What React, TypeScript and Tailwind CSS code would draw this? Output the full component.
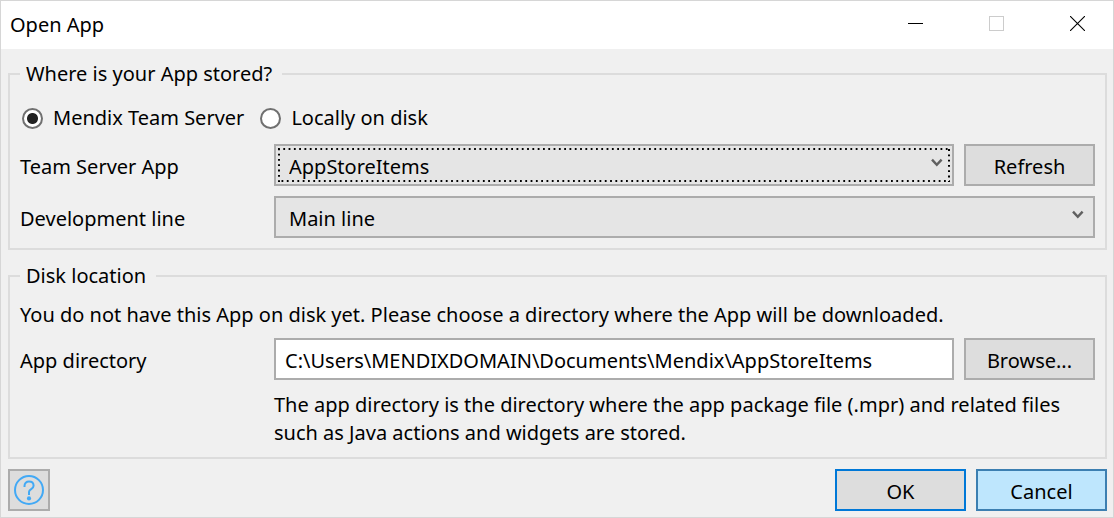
import { useState } from "react";
import type { ReactNode } from "react";

const control = "h-[42px] border-2 border-[#acacac]";
const pushButton = "h-[42px] w-[131px] shrink-0 border-2 pt-[3px] text-center";

function Chevron() {
  return (
    <svg className="pointer-events-none absolute top-[14px] right-[11px]" width="12" height="10" viewBox="0 0 12 10" fill="none" aria-hidden="true">
      <path d="M1 1.6 L5.8 6.8 L10.6 1.6" stroke="#606060" strokeWidth="2.4" />
    </svg>
  );
}

function Dropdown({ id, value, focused }: { id: string; value: string; focused?: boolean }) {
  return (
    <div className="relative min-w-0 flex-1">
      <select id={id} defaultValue={value} className={`${control} block w-full appearance-none bg-[#e5e5e5] pt-[3px] pl-[13px] outline-none`}>
        <option>{value}</option>
      </select>
      {focused && (
        <div className="pointer-events-none absolute inset-1">
          <svg className="block h-full w-full overflow-hidden" aria-hidden="true">
            <rect width="100%" height="100%" fill="none" stroke="#000" strokeWidth="4" strokeDasharray="1.8 3.5" />
          </svg>
        </div>
      )}
      <Chevron />
    </div>
  );
}

function Group({ title, children }: { title: string; children: ReactNode }) {
  return (
    <fieldset className="min-w-0 border-2 border-[#dcdcdc] px-[10px] pb-[10px]">
      <legend className="pr-[10px] pl-[6px]">{title}</legend>
      {children}
    </fieldset>
  );
}

function Row({ id, label, children }: { id: string; label: string; children: ReactNode }) {
  return (
    <div className="flex items-center">
      <label htmlFor={id} className="w-[254px] shrink-0 pt-[3px]">{label}</label>
      <div className="flex min-w-0 flex-1 gap-[10px]">{children}</div>
    </div>
  );
}

function Radio({ label, checked, onChange }: { label: string; checked: boolean; onChange: () => void }) {
  return (
    <label className="flex items-center gap-[10px]">
      <input
        type="radio"
        name="storage"
        checked={checked}
        onChange={onChange}
        className="h-[21px] w-[21px] appearance-none rounded-full border-2 border-[#707070] bg-white bg-clip-padding checked:bg-[radial-gradient(circle,#212121_5px,white_6px)]"
      />
      {label}
    </label>
  );
}

export default function App() {
  const [storage, setStorage] = useState("server");
  return (
    <main className="border border-[#d6d6d6] bg-[#f0f0f0] font-['Noto_Sans',sans-serif] text-[20px] leading-[28px] text-black">
      <header className="flex h-12 items-center justify-between bg-white pl-[9px]">
        <h1>Open App</h1>
        <div className="flex h-full gap-[9px]">
          <button type="button" aria-label="Minimize" className="flex w-[72px] items-center justify-center pb-[3px]">
            <svg width="15" height="15" viewBox="0 0 15 15"><path d="M0 7.5H15" stroke="#000" /></svg>
          </button>
          <button type="button" aria-label="Maximize" disabled className="flex w-[72px] items-center justify-center pb-[3px]">
            <svg width="15" height="15" viewBox="0 0 15 15"><rect x=".5" y=".5" width="14" height="14" fill="none" stroke="#ccc" /></svg>
          </button>
          <button type="button" aria-label="Close" className="flex w-[72px] items-center justify-center pb-[3px]">
            <svg width="15" height="15" viewBox="0 0 15 15"><path d="M0 0L15 15M15 0L0 15" stroke="#000" strokeWidth="1.1" /></svg>
          </button>
        </div>
      </header>

      <form className="flex flex-col pt-[11px] pr-[6px] pb-[6px] pl-[7px]" onSubmit={(e) => e.preventDefault()}>
        <Group title="Where is your App stored?">
          <div className="flex flex-col gap-[10px] pt-[14px]">
            <div className="flex h-8 items-center gap-4 pl-[2px]">
              <Radio label="Mendix Team Server" checked={storage === "server"} onChange={() => setStorage("server")} />
              <Radio label="Locally on disk" checked={storage === "disk"} onChange={() => setStorage("disk")} />
            </div>
            <Row id="app" label="Team Server App">
              <Dropdown id="app" value="AppStoreItems" focused />
              <button type="button" className={`${pushButton} border-[#acacac] bg-[#ddd]`}>Refresh</button>
            </Row>
            <Row id="line" label="Development line">
              <Dropdown id="line" value="Main line" />
            </Row>
          </div>
        </Group>

        <div className="mt-3">
          <Group title="Disk location">
            <div className="flex flex-col gap-[9px] pt-[11px]">
              <p>You do not have this App on disk yet. Please choose a directory where the App will be downloaded.</p>
              <Row id="directory" label="App directory">
                <input id="directory" type="text" defaultValue="C:\Users\MENDIXDOMAIN\Documents\Mendix\AppStoreItems" className={`${control} min-w-0 flex-1 bg-white px-[9px] pt-[2px] outline-none`} />
                <button type="button" className={`${pushButton} border-[#acacac] bg-[#ddd]`}>Browse...</button>
              </Row>
              <p className="max-w-[1060px] pt-[2px] pl-[254px]">The app directory is the directory where the app package file (.mpr) and related files such as Java actions and widgets are stored.</p>
            </div>
          </Group>
        </div>

        <footer className="mt-[10px] flex gap-[10px]">
          <button type="button" aria-label="Help" className={`${control} mr-auto flex w-[42px] items-center justify-center bg-[#ddd]`}>
            <svg width="30" height="30" viewBox="0 0 30 30" fill="none" stroke="#42a9f5" strokeWidth="2">
              <circle cx="15" cy="15" r="14" />
              <path d="M10.5 12V11C10.5 8.3 12.3 6.6 15 6.6S19.6 8.3 19.6 10.8C19.6 14.2 15 14 15 17V20" />
              <circle cx="15" cy="23.4" r="2.1" fill="#42a9f5" stroke="none" />
            </svg>
          </button>
          <button type="submit" className={`${pushButton} border-[#0078d7] bg-[#ddd]`}>OK</button>
          <button type="button" className={`${pushButton} border-[#3c7fb1] bg-[#bee6fd]`}>Cancel</button>
        </footer>
      </form>
    </main>
  );
}
